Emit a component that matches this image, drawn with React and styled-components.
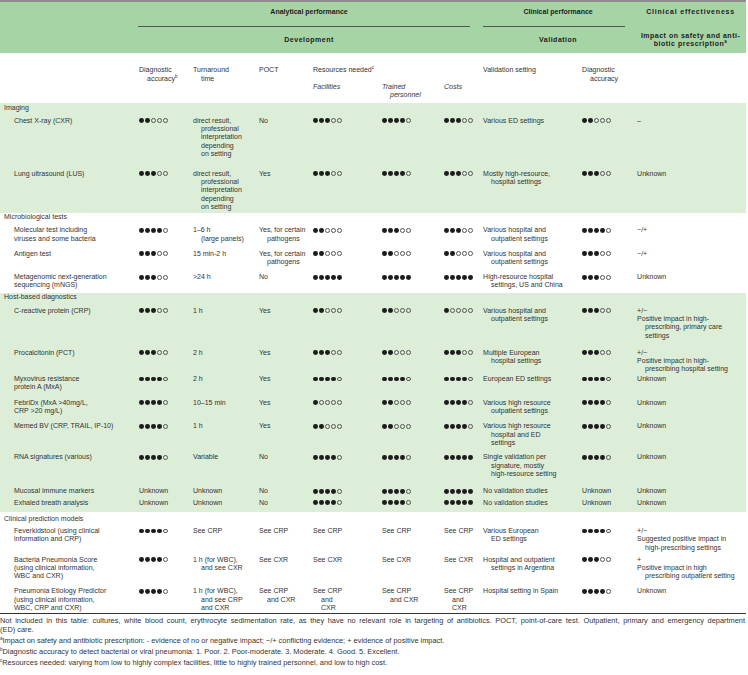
import React from 'react'
import styled, { createGlobalStyle } from 'styled-components'

const HEAD_GREEN = '#a6d4a5'
const BAND_GREEN = '#dcedd8'

const GlobalStyle = createGlobalStyle`
  body {
    margin: 0;
    background: #fff;
    font-family: "Liberation Sans", Arial, sans-serif;
    color: #333;
  }
`

const Page = styled.div`
  width: 748px;
`

const Table = styled.table`
  width: 746px;
  table-layout: fixed;
  border-collapse: separate;
  border-spacing: 0;
  border-top: 2px solid #8c8c8c;
  border-bottom: 1.5px solid #333;
  font-size: 7px;
  line-height: 8.4px;
`

const Col = styled.col`
  width: ${p => p.$w}px;
`

const HeadRow = styled.tr`
  background: ${p => (p.$green ? HEAD_GREEN : '#fff')};
`

const GroupHead = styled.th`
  font-weight: 700;
  color: #222;
  text-align: center;
  vertical-align: top;
  white-space: nowrap;
  letter-spacing: ${p => p.$ls || 0}px;
  padding: ${p => p.$pt || 0}px 0 ${p => p.$pb || 0}px;
`

const Rule = styled.div`
  border-top: 1px solid #555;
  margin: 9.9px ${p => p.$right}px 0 ${p => p.$left}px;
`

const SubHead = styled.th`
  font-weight: 400;
  font-style: ${p => (p.$italic ? 'italic' : 'normal')};
  text-align: left;
  vertical-align: top;
  white-space: nowrap;
  padding: ${p => p.$pt || 0}px 0 ${p => p.$pb || 0}px 10px;
  text-indent: -8px;
`

const Section = styled.tbody`
  background: ${p => (p.$band ? BAND_GREEN : '#fff')};
`

const LabelCell = styled.td`
  padding: ${p => p.$pt}px 0 ${p => p.$pb}px 4px;
  white-space: nowrap;
`

const Row = styled.tr`
  & > td {
    padding-bottom: ${p => p.$pad}px;
  }
`

const NameCell = styled.td`
  padding-left: 14px;
  vertical-align: top;
  white-space: nowrap;
`

const Cell = styled.td`
  padding-left: 10px;
  text-indent: -8px;
  vertical-align: top;
  white-space: nowrap;
`

const DotRow = styled.span`
  display: inline-flex;
  gap: 1.2px;
  vertical-align: -0.5px;
`

const Dot = styled.i`
  display: block;
  box-sizing: border-box;
  width: 4.8px;
  height: 4.8px;
  border-radius: 50%;
  background: ${p => (p.$on ? '#1c1c1c' : 'transparent')};
  border: ${p => (p.$on ? 'none' : '0.8px solid #555')};
`

const Sup = styled.sup`
  font-size: 4.5px;
  line-height: 0;
  vertical-align: 3px;
`

const Notes = styled.div`
  width: 745px;
  padding-top: 2px;
  font-size: 7.4px;
  line-height: 9px;
  color: #333;
`

const Note = styled.p`
  margin: 0 0 2px;
`

const FullLine = styled.span`
  display: block;
  text-align: justify;
  text-align-last: justify;
`

const DIRECT = ['direct result,', 'professional', 'interpretation', 'depending', 'on setting']
const MINUS = '\u2212'

const SECTIONS = [
  {
    title: 'Imaging', band: true, pt: 0.5, pb: 3.7,
    rows: [
      { name: ['Chest X-ray (CXR)'], da: 2, tat: DIRECT, poct: 'No', fac: 3, tp: 4, cost: 3, val: 'Various ED settings', acc: 2, imp: '–', pad: 10 },
      { name: ['Lung ultrasound (LUS)'], da: 3, tat: DIRECT, poct: 'Yes', fac: 3, tp: 4, cost: 3, val: ['Mostly high-resource,', 'hospital settings'], acc: 3, imp: 'Unknown', pad: 1 },
    ],
  },
  {
    title: 'Microbiological tests', band: false, pt: 0, pb: 4.2,
    rows: [
      { name: ['Molecular test including', 'viruses and some bacteria'], da: 4, tat: ['1–6 h', '(large panels)'], poct: ['Yes, for certain', 'pathogens'], fac: 2, tp: 3, cost: 3, val: ['Various hospital and', 'outpatient settings'], acc: 4, imp: `${MINUS}/+`, pad: 5.6 },
      { name: ['Antigen test'], da: 3, tat: '15 min-2 h', poct: ['Yes, for certain', 'pathogens'], fac: 2, tp: 2, cost: 2, val: ['Various hospital and', 'outpatient settings'], acc: 3, imp: `${MINUS}/+`, pad: 5.6 },
      { name: ['Metagenomic next-generation', 'sequencing (mNGS)'], da: 3, tat: '>24 h', poct: 'No', fac: 5, tp: 5, cost: 5, val: ['High-resource hospital', 'settings, US and China'], acc: 3, imp: 'Unknown', pad: 2.9 },
    ],
  },
  {
    title: 'Host-based diagnostics', band: true, pt: 0.5, pb: 4,
    rows: [
      { name: ['C-reactive protein (CRP)'], da: 3, tat: '1 h', poct: 'Yes', fac: 2, tp: 2, cost: 1, val: ['Various hospital and', 'outpatient settings'], acc: 3, imp: { mark: `+/${MINUS}`, text: ['Positive impact in high-', 'prescribing, primary care', 'settings'] }, pad: 7.3 },
      { name: ['Procalcitonin (PCT)'], da: 3, tat: '2 h', poct: 'Yes', fac: 3, tp: 2, cost: 3, val: ['Multiple European', 'hospital settings'], acc: 3, imp: { mark: `+/${MINUS}`, text: ['Positive impact in high-', 'prescribing hospital setting'] }, pad: 0 },
      { name: ['Myxovirus resistance', 'protein A (MxA)'], da: 4, tat: '2 h', poct: 'Yes', fac: 4, tp: 4, cost: 4, val: 'European ED settings', acc: 4, imp: 'Unknown', pad: 5.9 },
      { name: ['FebriDx (MxA >40mg/L,', 'CRP >20 mg/L)'], da: 4, tat: '10–15 min', poct: 'Yes', fac: 1, tp: 2, cost: 4, val: ['Various high resource', 'outpatient settings'], acc: 4, imp: 'Unknown', pad: 5.9 },
      { name: ['Memed BV (CRP, TRAIL, IP-10)'], da: 4, tat: '1 h', poct: 'Yes', fac: 2, tp: 2, cost: 4, val: ['Various high resource', 'hospital and ED', 'settings'], acc: 4, imp: 'Unknown', pad: 4.8 },
      { name: ['RNA signatures (various)'], da: 4, tat: 'Variable', poct: 'No', fac: 4, tp: 4, cost: 5, val: ['Single validation per', 'signature, mostly', 'high-resource setting'], acc: 4, imp: 'Unknown', pad: 7.6 },
      { name: ['Mucosal immune markers'], da: 'Unknown', tat: 'Unknown', poct: 'No', fac: 4, tp: 4, cost: 5, val: 'No validation studies', acc: 'Unknown', imp: 'Unknown', pad: 2.2 },
      { name: ['Exhaled breath analysis'], da: 'Unknown', tat: 'Unknown', poct: 'No', fac: 4, tp: 4, cost: 5, val: 'No validation studies', acc: 'Unknown', imp: 'Unknown', pad: 4.7 },
    ],
  },
  {
    title: 'Clinical prediction models', band: false, pt: 3.5, pb: 2.2,
    rows: [
      { name: ['Feverkidstool (using clinical', 'information and CRP)'], da: 4, tat: 'See CRP', poct: 'See CRP', fac: 'See CRP', tp: 'See CRP', cost: 'See CRP', val: ['Various European', 'ED settings'], acc: 4, imp: { mark: `+/${MINUS}`, text: ['Suggested positive impact in', 'high-prescribing settings'] }, pad: 2.6 },
      { name: ['Bacteria Pneumonia Score', '(using clinical information,', 'WBC and CXR)'], da: 4, tat: ['1 h (for WBC),', 'and see CXR'], poct: 'See CXR', fac: 'See CXR', tp: 'See CXR', cost: 'See CXR', val: ['Hospital and outpatient', 'settings in Argentina'], acc: 3, imp: { mark: '+', text: ['Positive impact in high', 'prescribing outpatient setting'] }, pad: 5.6 },
      { name: ['Pneumonia Etiology Predictor', '(using clinical information,', 'WBC, CRP and CXR)'], da: 4, tat: ['1 h (for WBC),', 'and see CRP', 'and CXR'], poct: ['See CRP', 'and CXR'], fac: ['See CRP', 'and', 'CXR'], tp: ['See CRP', 'and CXR'], cost: ['See CRP', 'and', 'CXR'], val: 'Hospital setting in Spain', acc: 4, imp: 'Unknown', pad: 0.6 },
    ],
  },
]

const lines = v =>
  Array.isArray(v)
    ? v.map((l, i) => (
        <React.Fragment key={i}>
          {i > 0 && <br />}
          {l}
        </React.Fragment>
      ))
    : v

const Dots = ({ n }) => (
  <DotRow>
    {Array.from({ length: 5 }).map((_, i) => (
      <Dot key={i} $on={i < n} />
    ))}
  </DotRow>
)

const value = v => (typeof v === 'number' ? <Dots n={v} /> : lines(v))

const impact = v =>
  v && v.mark ? (
    <>
      <div>{v.mark}</div>
      <div>{lines(v.text)}</div>
    </>
  ) : (
    lines(v)
  )

const COLS = [137, 54, 66, 54, 69, 62, 39, 99, 55, 111]

const App = () => {
  return (
    <Page>
      <GlobalStyle />
      <Table>
        <colgroup>
          {COLS.map((w, i) => (
            <Col key={i} $w={w} />
          ))}
        </colgroup>
        <thead>
          <HeadRow $green>
            <GroupHead rowSpan={2} />
            <GroupHead colSpan={6} $pt={5.7}>
              Analytical performance
              <Rule $left={1} $right={11} />
            </GroupHead>
            <GroupHead colSpan={2} $pt={5.7}>
              Clinical performance
              <Rule $left={2} $right={10} />
            </GroupHead>
            <GroupHead $pt={5.7} $ls={0.8}>Clinical effectiveness</GroupHead>
          </HeadRow>
          <HeadRow $green>
            <GroupHead colSpan={6} $pt={9} $pb={8.6} $ls={0.5}>Development</GroupHead>
            <GroupHead colSpan={2} $pt={9} $pb={8.6} $ls={0.5}>Validation</GroupHead>
            <GroupHead $pt={5} $pb={4.2} $ls={0.5}>
              Impact on safety and anti-
              <br />
              biotic prescription<Sup>a</Sup>
            </GroupHead>
          </HeadRow>
          <HeadRow>
            <SubHead rowSpan={2} />
            <SubHead rowSpan={2} $pt={13.5}>
              Diagnostic
              <br />
              accuracy<Sup>b</Sup>
            </SubHead>
            <SubHead rowSpan={2} $pt={13.5}>
              Turnaround
              <br />
              time
            </SubHead>
            <SubHead rowSpan={2} $pt={13.5}>POCT</SubHead>
            <SubHead colSpan={3} $pt={13.5} $pb={7.8}>
              Resources needed<Sup>c</Sup>
            </SubHead>
            <SubHead rowSpan={2} $pt={13.5}>Validation setting</SubHead>
            <SubHead rowSpan={2} $pt={13.5}>
              Diagnostic
              <br />
              accuracy
            </SubHead>
            <SubHead rowSpan={2} />
          </HeadRow>
          <HeadRow>
            <SubHead $italic $pb={3.5}>Facilities</SubHead>
            <SubHead $italic $pb={3.5}>
              Trained
              <br />
              personnel
            </SubHead>
            <SubHead $italic $pb={3.5}>Costs</SubHead>
          </HeadRow>
        </thead>
        {SECTIONS.map(s => (
          <Section key={s.title} $band={s.band}>
            <tr>
              <LabelCell colSpan={10} $pt={s.pt} $pb={s.pb}>
                {s.title}
              </LabelCell>
            </tr>
            {s.rows.map((r, i) => (
              <Row key={i} $pad={r.pad}>
                <NameCell>{lines(r.name)}</NameCell>
                <Cell>{value(r.da)}</Cell>
                <Cell>{value(r.tat)}</Cell>
                <Cell>{value(r.poct)}</Cell>
                <Cell>{value(r.fac)}</Cell>
                <Cell>{value(r.tp)}</Cell>
                <Cell>{value(r.cost)}</Cell>
                <Cell>{value(r.val)}</Cell>
                <Cell>{value(r.acc)}</Cell>
                <Cell>{impact(r.imp)}</Cell>
              </Row>
            ))}
          </Section>
        ))}
      </Table>
      <Notes>
        <Note>
          <FullLine>
            Not included in this table: cultures, white blood count, erythrocyte sedimentation rate, as they have no
            relevant role in targeting of antibiotics. POCT, point-of-care test. Outpatient, primary and emergency
            department
          </FullLine>
          (ED) care.
        </Note>
        <Note>
          <Sup>a</Sup>Impact on safety and antibiotic prescription: - evidence of no or negative impact; {MINUS}/+
          conflicting evidence; + evidence of positive impact.
        </Note>
        <Note>
          <Sup>b</Sup>Diagnostic accuracy to detect bacterial or viral pneumonia: 1. Poor. 2. Poor-moderate. 3.
          Moderate. 4. Good. 5. Excellent.
        </Note>
        <Note>
          <Sup>c</Sup>Resources needed: varying from low to highly complex facilities, little to highly trained
          personnel, and low to high cost.
        </Note>
      </Notes>
    </Page>
  )
}

export default App
